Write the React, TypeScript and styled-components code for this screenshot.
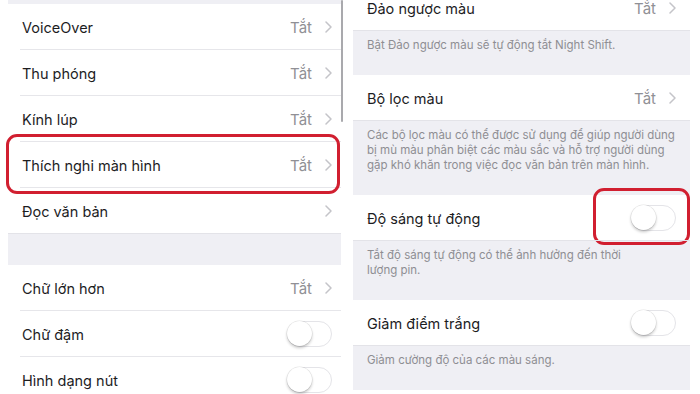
import styled, { createGlobalStyle } from "styled-components";

const Global = createGlobalStyle`
    html, body {
        margin: 0;
        padding: 0;
        background: #fff;
        width: 700px;
        height: 394px;
        overflow: hidden;
    }
    body {
        font-family: "Inter", "Noto Sans", "Liberation Sans", sans-serif;
        color: #1d1d1f;
    }
`

type Item = {
    label: string
    value?: string
    chevron?: boolean
    toggle?: boolean
    marked?: "row" | "toggle"
    note?: string[]
}

const leftTop: Item[] = [
    { label: "VoiceOver", value: "Tắt", chevron: true },
    { label: "Thu phóng", value: "Tắt", chevron: true },
    { label: "Kính lúp", value: "Tắt", chevron: true },
    { label: "Thích nghi màn hình", value: "Tắt", chevron: true, marked: "row" },
    { label: "Đọc văn bản", chevron: true },
]

const leftBottom: Item[] = [
    { label: "Chữ lớn hơn", value: "Tắt", chevron: true },
    { label: "Chữ đậm", toggle: true },
    { label: "Hình dạng nút", toggle: true },
]

const right: Item[] = [
    { label: "Đảo ngược màu", value: "Tắt", chevron: true, note: ["Bật Đảo ngược màu sẽ tự động tắt Night Shift."] },
    {
        label: "Bộ lọc màu", value: "Tắt", chevron: true, note: [
            "Các bộ lọc màu có thể được sử dụng để giúp người dùng",
            "bị mù màu phân biệt các màu sắc và hỗ trợ người dùng",
            "gặp khó khăn trong việc đọc văn bản trên màn hình.",
        ]
    },
    { label: "Độ sáng tự động", toggle: true, marked: "toggle", note: ["Tắt độ sáng tự động có thể ảnh hưởng đến thời", "lượng pin."] },
    { label: "Giảm điểm trắng", toggle: true, note: ["Giảm cường độ của các màu sáng."] },
]

const Chevron = () => (
    <svg width="7" height="12" viewBox="0 0 7 12">
        <path d="M1 1l5 5-5 5" fill="none" stroke="#c4c4c9" strokeWidth="1.5" strokeLinecap="round" strokeLinejoin="round" />
    </svg>
)

const Cell = ({ item, last, wide }: { item: Item, last?: boolean, wide?: boolean }) => (
    <Row $last={last} $wide={wide}>
        <Label>{item.label}</Label>
        <Accessory>
            {item.value && <Value>{item.value}</Value>}
            {item.chevron && <Chevron />}
            {item.toggle && <Toggle><Knob /></Toggle>}
            {item.marked === "toggle" && <ToggleMark />}
        </Accessory>
        {item.marked === "row" && <RowMark />}
    </Row>
)

const App = () => {
    return (<Page>
        <Global />
        <LeftScreen>
            <Band $h={4} />
            {leftTop.map((it, i) => <Cell key={it.label} item={it} last={i === leftTop.length - 1} />)}
            <Band $h={31} />
            {leftBottom.map((it) => <Cell key={it.label} item={it} />)}
            <Scroller />
        </LeftScreen>
        <RightScreen>
            {right.map((it) => (
                <div key={it.label}>
                    <Cell item={it} last wide />
                    <Note>
                        {it.note?.map((line) => <div key={line}>{line}</div>)}
                    </Note>
                </div>
            ))}
        </RightScreen>
    </Page>)
}

const Page = styled.div`
    display: flex;
    width: 700px;
    height: 394px;
    overflow: hidden;
`

const LeftScreen = styled.div`
    position: relative;
    margin-left: 8px;
    width: 333px;
    display: flex;
    flex-direction: column;
`

const RightScreen = styled.div`
    margin-left: 12px;
    margin-top: -15px;
    width: 337px;
    display: flex;
    flex-direction: column;
`

const Band = styled.div<{ $h: number }>`
    height: ${p => p.$h}px;
    flex-shrink: 0;
    background: #efeff4;
`

const Scroller = styled.div`
    position: absolute;
    right: -2px;
    top: 0;
    width: 2px;
    height: 122px;
    border-radius: 1px;
    background: #a9a9ad;
`

const Row = styled.div<{ $last?: boolean, $wide?: boolean }>`
    position: relative;
    height: 46px;
    flex-shrink: 0;
    display: flex;
    align-items: center;
    justify-content: space-between;
    padding: 0 ${p => p.$wide ? 14 : 9}px 0 14px;
    box-sizing: border-box;
    background: #fff;
    &::after {
        content: "";
        position: absolute;
        left: ${p => p.$last ? 0 : 12}px;
        right: 0;
        bottom: 0;
        height: 1px;
        background: ${p => p.$last ? "#e3e3e8" : "#e6e6ea"};
    }
`

const Label = styled.span`
    font-size: 14.5px;
    color: #1d1d1f;
`

const Accessory = styled.div`
    position: relative;
    display: flex;
    align-items: center;
    gap: 13px;
`

const Value = styled.span`
    font-size: 15px;
    color: #909095;
`

const Toggle = styled.div`
    position: relative;
    width: 45px;
    height: 26px;
    border-radius: 13px;
    border: 1.5px solid #e4e4e8;
    background: #fff;
    box-sizing: border-box;
`

const Knob = styled.div`
    position: absolute;
    left: -1px;
    top: -1px;
    width: 25px;
    height: 25px;
    border-radius: 50%;
    background: #fff;
    box-shadow: 0 2px 3px rgba(0, 0, 0, 0.22), 0 0 0 0.5px rgba(0, 0, 0, 0.1);
`

const RowMark = styled.div`
    position: absolute;
    left: -2px;
    right: 1px;
    top: -8px;
    bottom: -6px;
    border: 3.5px solid #d11f30;
    border-radius: 11px;
    z-index: 2;
    pointer-events: none;
`

const ToggleMark = styled.div`
    position: absolute;
    left: -38px;
    right: -14px;
    top: -17px;
    bottom: -14px;
    border: 3.5px solid #d11f30;
    border-radius: 11px;
    pointer-events: none;
`

const Note = styled.div`
    background: #efeff4;
    padding: 7px 14px 22px;
    font-size: 11.5px;
    line-height: 15px;
    color: #8e8e93;
    white-space: nowrap;
`

export default App
